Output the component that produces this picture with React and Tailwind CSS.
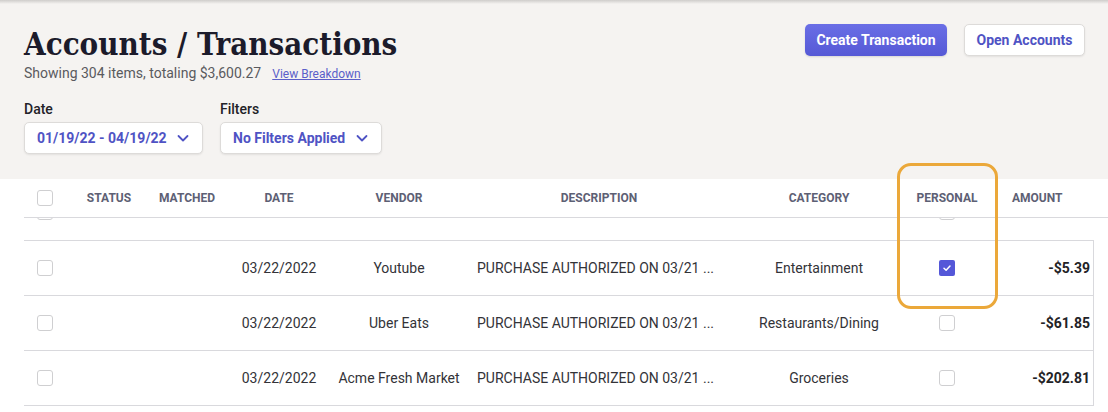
import React from "react";

function Box({ checked }) {
  if (checked) {
    return (
      <div className="w-[16px] h-[16px] rounded-[2px] bg-[#5457d8] flex items-center justify-center">
        <svg width="10" height="10" viewBox="0 0 10 10" fill="none">
          <path d="M2 5.2 L4.1 7.2 L8 3" stroke="white" strokeWidth="1.5" strokeLinecap="round" strokeLinejoin="round" />
        </svg>
      </div>
    );
  }
  return <div className="w-[16px] h-[16px] rounded-[3px] border border-[#cfcfd1] bg-white" />;
}

function Chevron() {
  return (
    <svg width="14" height="14" viewBox="0 0 14 14" fill="none">
      <path d="M2.5 5 L7 9.5 L11.5 5" stroke="#4f53c4" strokeWidth="1.8" strokeLinecap="round" strokeLinejoin="round" />
    </svg>
  );
}

const cols = "grid grid-cols-[42px_86px_70px_114px_126px_274px_166px_90px_102px]";

const rows = [
  { date: "03/22/2022", vendor: "Youtube", cat: "Entertainment", personal: true, amt: "-$5.39" },
  { date: "03/22/2022", vendor: "Uber Eats", cat: "Restaurants/Dining", personal: false, amt: "-$61.85" },
  { date: "03/22/2022", vendor: "Acme Fresh Market", cat: "Groceries", personal: false, amt: "-$202.81" },
];

export default function App() {
  return (
    <div className="relative w-[1108px] h-[412px] overflow-hidden bg-[#f5f3f1] font-['Roboto',sans-serif]">
      {/* top shadow */}
      <div className="absolute top-0 left-0 right-0 h-[4px] bg-gradient-to-b from-[#cfcdcb] to-transparent" />

      {/* header section */}
      <div className="h-[179px] flex justify-between pl-[24px] pr-[23px]">
        <div className="pt-[26px]">
          <h1 className="font-['DejaVu_Serif_Condensed','DejaVu_Serif',serif] font-stretch-condensed font-bold text-[31px] leading-[36px] text-[#1c1b2b]">
            Accounts / Transactions
          </h1>
          <div className="mt-[2px] flex items-baseline text-[14px] leading-[18px] text-[#5a5a5e]">
            <span>Showing 304 items, totaling $3,600.27</span>
            <span className="ml-[11px] text-[12px] text-[#5b5fc9] underline">View Breakdown</span>
          </div>
          <div className="mt-[17px] flex gap-[17px]">
            <div>
              <div className="text-[14px] leading-[18px] font-medium text-[#222228]">Date</div>
              <div className="mt-[4px] w-[179px] h-[32px] bg-white border border-[#dddbd9] rounded-[5px] shadow-[0_1px_2px_rgba(0,0,0,0.08)] flex items-center justify-between pl-[12px] pr-[12px]">
                <span className="text-[14px] font-bold text-[#4f53c4]">01/19/22 - 04/19/22</span>
                <Chevron />
              </div>
            </div>
            <div>
              <div className="text-[14px] leading-[18px] font-medium text-[#222228]">Filters</div>
              <div className="mt-[4px] w-[162px] h-[32px] bg-white border border-[#dddbd9] rounded-[5px] shadow-[0_1px_2px_rgba(0,0,0,0.08)] flex items-center justify-between pl-[12px] pr-[12px]">
                <span className="text-[14px] font-bold text-[#4f53c4]">No Filters Applied</span>
                <Chevron />
              </div>
            </div>
          </div>
        </div>
        <div className="pt-[24px] flex gap-[17px] items-start">
          <button className="h-[32px] w-[142px] rounded-[5px] bg-gradient-to-b from-[#6a6ee6] to-[#5659d6] text-white text-[14px] font-bold shadow-[0_1px_2px_rgba(0,0,0,0.12)]">
            Create Transaction
          </button>
          <button className="h-[32px] w-[121px] rounded-[5px] bg-white border border-[#dddbd9] text-[#4f53c4] text-[14px] font-bold shadow-[0_1px_2px_rgba(0,0,0,0.08)]">
            Open Accounts
          </button>
        </div>
      </div>

      {/* table */}
      <div className="bg-white h-[233px]">
        <div className={`${cols} ml-[24px] h-[39px] items-center border-b border-[#d9d9dd] text-[12px] font-bold text-[#5d6074] uppercase`}>
          <div className="flex justify-center"><Box /></div>
          <div className="text-center">Status</div>
          <div className="text-center">Matched</div>
          <div className="text-center">Date</div>
          <div className="text-center">Vendor</div>
          <div className="text-center">Description</div>
          <div className="text-center">Category</div>
          <div className="text-center">Personal</div>
          <div className="pl-[20px]">Amount</div>
        </div>
        {/* partially scrolled row */}
        <div className={`${cols} ml-[24px] w-[1070px] h-[22px] overflow-hidden`}>
          <div className="flex justify-center -mt-[14px]"><Box /></div>
          <div />
          <div />
          <div />
          <div />
          <div />
          <div />
          <div className="flex justify-center -mt-[14px]"><Box /></div>
          <div />
        </div>
        <div className="ml-[24px] w-[1070px] border-t border-r border-[#d9d9dd]">
          {rows.map((r, i) => (
            <div key={i} className={`${cols} h-[55px] items-center border-b border-[#d9d9dd] text-[14px] text-[#333338]`}>
              <div className="flex justify-center"><Box /></div>
              <div />
              <div />
              <div className="text-center">{r.date}</div>
              <div className="text-center whitespace-nowrap">{r.vendor}</div>
              <div className="pl-[15px] whitespace-nowrap">PURCHASE AUTHORIZED ON 03/21 ...</div>
              <div className="text-center">{r.cat}</div>
              <div className="flex justify-center"><Box checked={r.personal} /></div>
              <div className="text-right pr-[4px] font-bold text-[#222226]">{r.amt}</div>
            </div>
          ))}
        </div>
      </div>

      {/* highlight */}
      <div className="absolute left-[897px] top-[163px] w-[101px] h-[146px] border-[3px] border-[#eba83a] rounded-[14px] pointer-events-none" />
    </div>
  );
}
